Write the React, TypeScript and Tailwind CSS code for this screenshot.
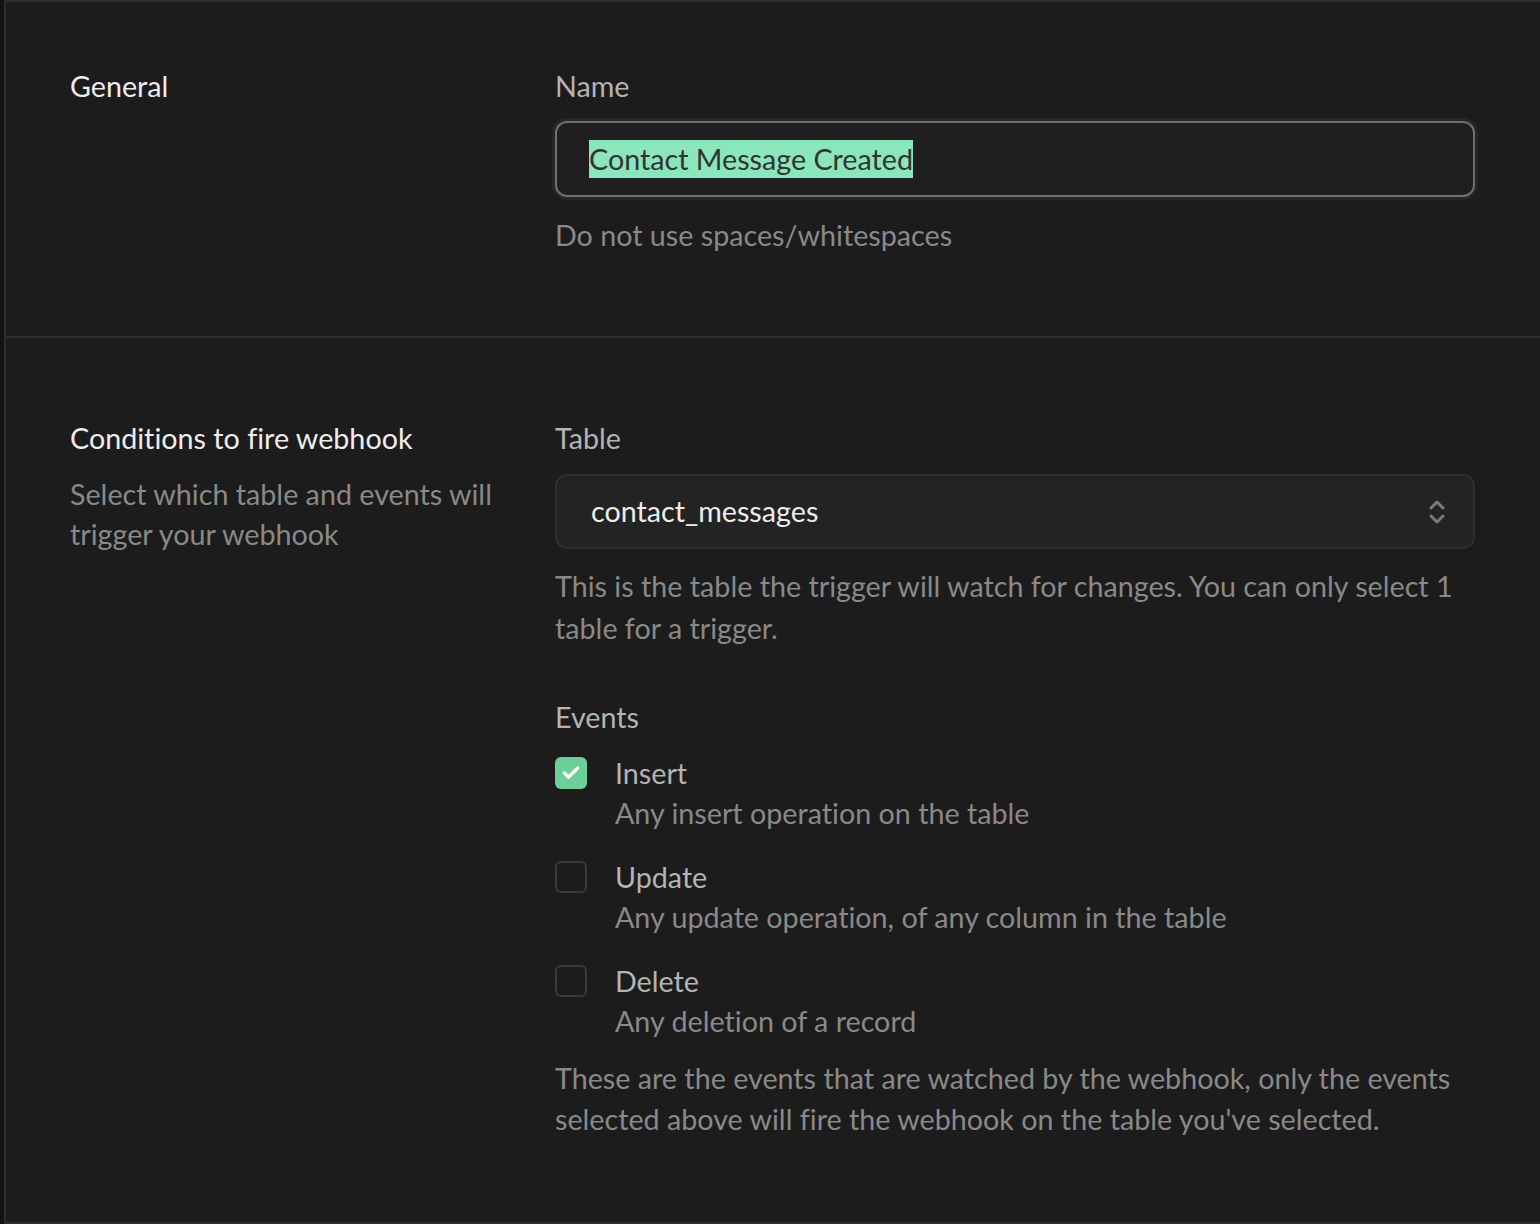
import { Check } from 'lucide-react';

const events = [
  { label: 'Insert', description: 'Any insert operation on the table', checked: true },
  { label: 'Update', description: 'Any update operation, of any column in the table', checked: false },
  { label: 'Delete', description: 'Any deletion of a record', checked: false },
];

function EventRow({ label, description, checked }: { label: string; description: string; checked: boolean }) {
  return (
    <div className="flex items-start gap-7">
      <div className="flex h-10 items-center">
        {checked ? (
          <span className="flex h-8 w-8 items-center justify-center rounded-md bg-[#6acf98]">
            <Check className="h-5 w-5 text-white" strokeWidth={4} />
          </span>
        ) : (
          <span className="h-8 w-8 rounded-md border-2 border-[#3a3a3a]" />
        )}
      </div>
      <div>
        <div className="leading-10 text-[#b4b4b4]">{label}</div>
        <div className="leading-10 text-[#898989]">{description}</div>
      </div>
    </div>
  );
}

export default function App() {
  return (
    <div className="flex h-[1224px] w-[1540px] bg-[#141414] text-[28.7px] [font-variant-ligatures:none] font-['Lato','Liberation_Sans',sans-serif]">
      <div className="w-1" />
      <div className="flex flex-1 flex-col border-y-2 border-l-2 border-[#2e2e2e] bg-[#1c1c1c]">
        <section className="grid grid-cols-[485px_920px] border-b-2 border-[#2e2e2e] px-[64px] pt-[68px] pb-[85px]">
          <h2 className="leading-8 text-[#ededed]">General</h2>
          <div>
            <label className="block leading-8 text-[#b4b4b4]">Name</label>
            <div className="-mx-[3px] mt-[16px] rounded-[15px] bg-[#262626] p-[3px]">
              <div className="flex h-[76px] items-center rounded-[12px] border-2 border-[#6f6f6f] bg-[#1f1f1f] px-[32px]">
                <span className="bg-[#8ae6bb] leading-[38px] text-[#333333]">Contact Message Created</span>
              </div>
            </div>
            <p className="mt-[19px] leading-8 text-[#898989]">Do not use spaces/whitespaces</p>
          </div>
        </section>

        <section className="grid grid-cols-[485px_920px] px-[64px] pt-[84px]">
          <div>
            <h2 className="leading-8 text-[#ededed]">Conditions to fire webhook</h2>
            <p className="mt-5 leading-10 text-[#898989]">
              Select which table and events will
              <br />
              trigger your webhook
            </p>
          </div>
          <div>
            <label className="block leading-8 text-[#b4b4b4]">Table</label>
            <div className="mt-[20px] flex h-[75px] items-center justify-between rounded-[12px] border-2 border-[#2e2e2e] bg-[#232323] pl-[34px] pr-[26px]">
              <span className="text-[#ededed]">contact_messages</span>
              <svg width="20" height="34" viewBox="0 0 20 34" fill="none" stroke="#7a7a7a" strokeWidth="3" strokeLinecap="round" strokeLinejoin="round">
                <path d="M4 13 L10 7 L16 13" />
                <path d="M4 21 L10 27 L16 21" />
              </svg>
            </div>
            <p className="mt-[16px] leading-[42px] text-[#898989]">
              This is the table the trigger will watch for changes. You can only select 1 table for a trigger.
            </p>

            <label className="mt-[48px] block leading-10 text-[#b4b4b4]">Events</label>
            <div className="mt-4 flex flex-col gap-6">
              {events.map((event) => (
                <EventRow key={event.label} {...event} />
              ))}
            </div>
            <p className="mt-[17px] leading-[41px] text-[#898989]">
              These are the events that are watched by the webhook, only the events selected above will fire the webhook on the table you've selected.
            </p>
          </div>
        </section>
      </div>
    </div>
  );
}
